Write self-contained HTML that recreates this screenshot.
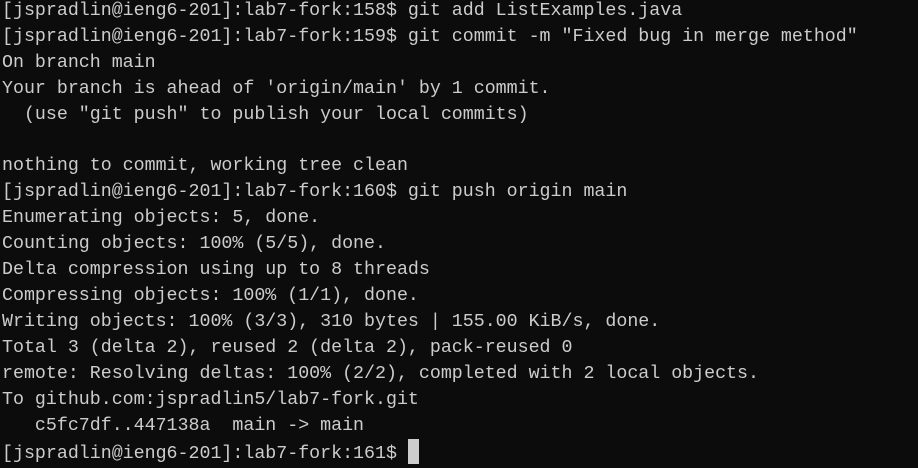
<!DOCTYPE html>
<html><head><meta charset="utf-8"><style>
html,body{margin:0;padding:0;background:#0c0c0c;width:918px;height:468px;overflow:hidden}
pre{margin:0;padding:0 0 0 2px;position:relative;top:-1px;font-family:"Liberation Mono",monospace;font-size:18.3px;line-height:25.9px;color:#cccccc;white-space:pre}
.c{display:inline-block;width:11px;height:25px;background:#cccccc;vertical-align:-6px}
</style></head><body><pre>[jspradlin@ieng6-201]:lab7-fork:158$ git add ListExamples.java
[jspradlin@ieng6-201]:lab7-fork:159$ git commit -m "Fixed bug in merge method"
On branch main
Your branch is ahead of 'origin/main' by 1 commit.
  (use "git push" to publish your local commits)

nothing to commit, working tree clean
[jspradlin@ieng6-201]:lab7-fork:160$ git push origin main
Enumerating objects: 5, done.
Counting objects: 100% (5/5), done.
Delta compression using up to 8 threads
Compressing objects: 100% (1/1), done.
Writing objects: 100% (3/3), 310 bytes | 155.00 KiB/s, done.
Total 3 (delta 2), reused 2 (delta 2), pack-reused 0
remote: Resolving deltas: 100% (2/2), completed with 2 local objects.
To github.com:jspradlin5/lab7-fork.git
   c5fc7df..447138a  main -&gt; main
[jspradlin@ieng6-201]:lab7-fork:161$ <span class="c"></span></pre></body></html>
